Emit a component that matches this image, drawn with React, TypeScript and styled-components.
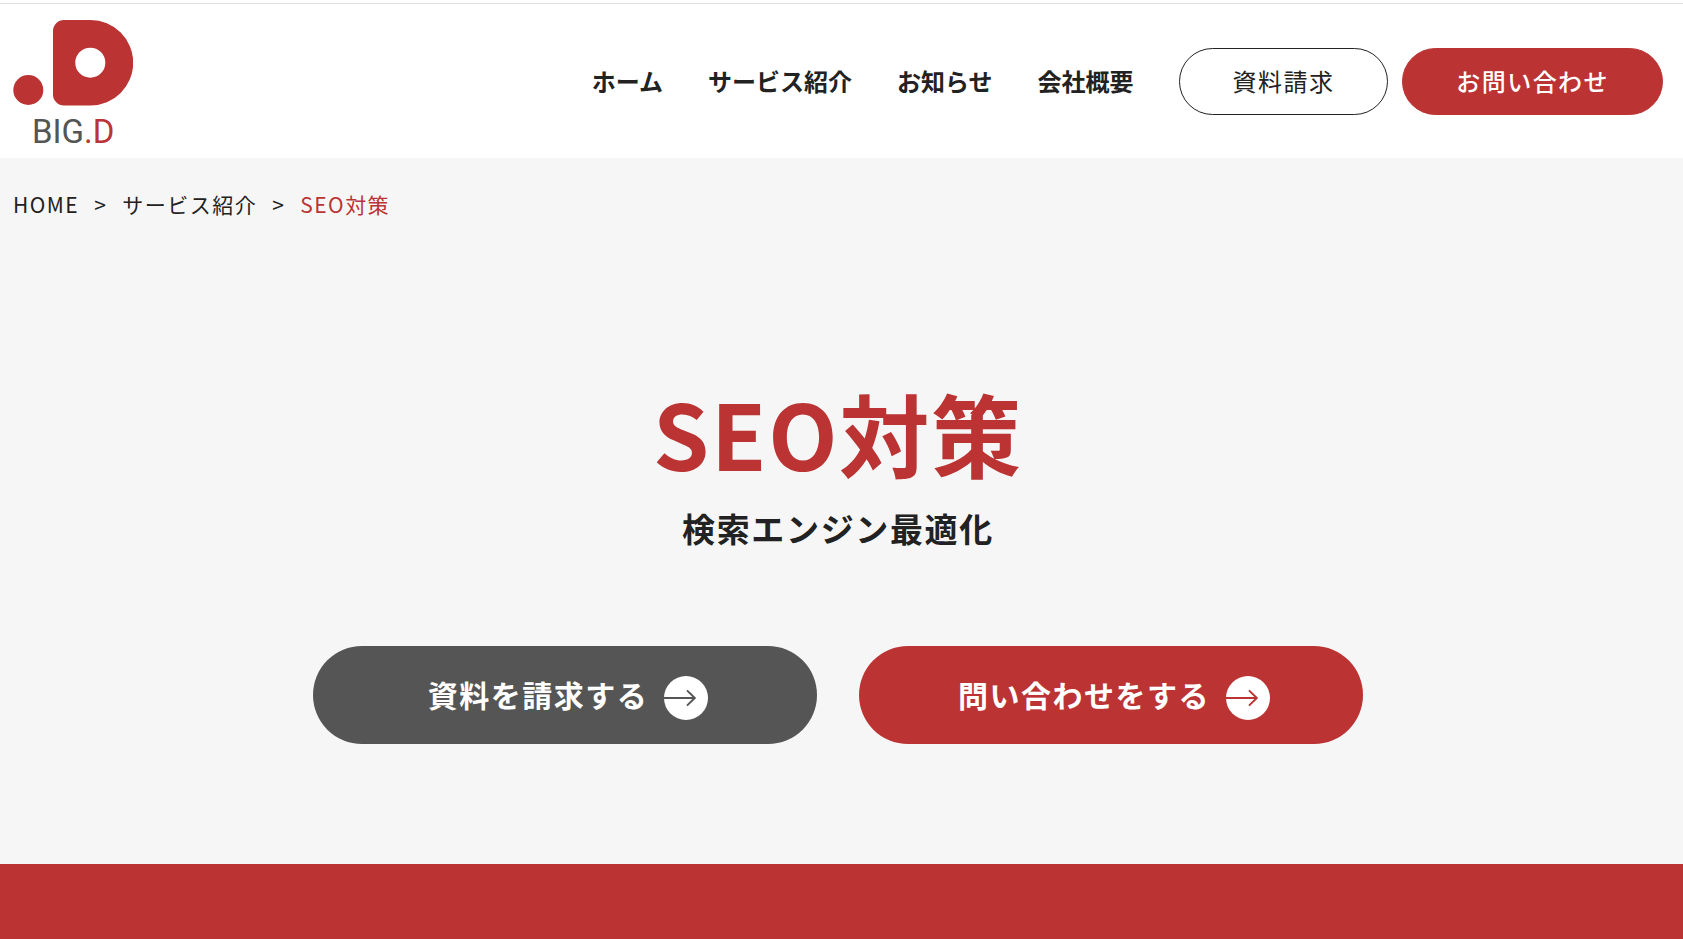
import React from "react";
import styled, { createGlobalStyle } from "styled-components";

const red = "#bb3333";
const ink = "#222222";
const gray = "#555555";

const GlobalStyle = createGlobalStyle`
  *, *::before, *::after { box-sizing: border-box; }
  body {
    margin: 0;
    background: #ffffff;
    color: ${ink};
    font-family: "Noto Sans CJK JP", "Noto Sans", sans-serif;
  }
  a { color: inherit; text-decoration: none; }
`;

const Header = styled.header`
  display: flex;
  justify-content: space-between;
  align-items: flex-start;
  margin-top: 3px;
  padding: 16px 20px 12px 13px;
  border-top: 1px solid #e0e0e0;
`;

const LogoLink = styled.a`
  display: flex;
  flex-direction: column;
  width: 120px;
`;

const LogoMark = styled.svg`
  display: block;
  width: 120px;
  height: 86px;
`;

const LogoText = styled.span`
  padding: 11px 0 0 19px;
  font-family: Roboto, sans-serif;
  font-size: 33px;
  line-height: 29px;
  color: ${gray};

  em {
    font-style: normal;
    color: ${red};
  }
`;

const HeaderRight = styled.div`
  display: flex;
  align-items: center;
  gap: 45px;
  padding-top: 28px;
`;

const NavList = styled.ul`
  display: flex;
  gap: 45px;
  margin: 0;
  padding: 0 0 2px;
  list-style: none;
  font-size: 24px;
  font-weight: 700;
  line-height: 36px;
  white-space: nowrap;
`;

const HeaderButtons = styled.div`
  display: flex;
  gap: 14px;
`;

const PillLink = styled.a<{ $filled?: boolean }>`
  padding: 14px 53px 16px;
  border: 1px solid ${(p) => (p.$filled ? red : ink)};
  border-radius: 34px;
  background: ${(p) => (p.$filled ? red : "#ffffff")};
  color: ${(p) => (p.$filled ? "#ffffff" : ink)};
  font-size: 24px;
  font-weight: ${(p) => (p.$filled ? 500 : 400)};
  line-height: 35px;
  letter-spacing: 0.06em;
  white-space: nowrap;
`;

const Hero = styled.main`
  padding-bottom: 120px;
  background: #f6f6f6;
`;

const Breadcrumb = styled.ol`
  display: flex;
  gap: 15px;
  margin: 0;
  padding: 31px 13px 0;
  list-style: none;
  font-size: 21px;
  line-height: 30px;
  letter-spacing: 0.07em;

  li { display: flex; gap: 15px; }
  li + li::before { content: ">"; }
  [aria-current] { color: ${red}; }
`;

const Title = styled.h1`
  margin: 143px 7px 0 0;
  color: ${red};
  font-size: 90px;
  font-weight: 700;
  line-height: 140px;
  letter-spacing: 0.02em;
  text-align: center;
`;

const Subtitle = styled.p`
  margin: 0 7px 0 0;
  font-size: 33px;
  font-weight: 700;
  line-height: 52px;
  letter-spacing: 0.05em;
  text-align: center;
`;

const Actions = styled.div`
  display: flex;
  justify-content: center;
  gap: 42px;
  margin: 92px 7px 0 0;
`;

const ActionLink = styled.a<{ $color: string }>`
  display: flex;
  justify-content: center;
  align-items: center;
  gap: 16px;
  width: 504px;
  height: 98px;
  padding: 0 0 2px 6px;
  border-radius: 49px;
  background: ${(p) => p.$color};
  color: #ffffff;
  font-size: 30px;
  font-weight: 700;
  line-height: 45px;
  letter-spacing: 0.05em;
`;

const ArrowIcon = styled.svg`
  flex: none;
  width: 44px;
  height: 44px;
  margin-top: 8px;
`;

const Band = styled.section`
  min-height: 75px;
  background: ${red};
`;

const navItems = ["ホーム", "サービス紹介", "お知らせ", "会社概要"];

function Arrow({ color }: { color: string }) {
  return (
    <ArrowIcon viewBox="0 0 45 45" aria-hidden="true">
      <circle cx="22.5" cy="22.5" r="22.5" fill="#ffffff" />
      <path d="M0 22.5H31.5M23.5 14.7L31.5 22.5L23.5 30.3" fill="none" stroke={color} strokeWidth="2" />
    </ArrowIcon>
  );
}

export default function App() {
  return (
    <>
      <GlobalStyle />
      <Header>
        <LogoLink href="#" aria-label="BIG.D">
          <LogoMark viewBox="0 0 120 86" aria-hidden="true">
            <path
              fillRule="evenodd"
              fill={red}
              d="M51 0H77.500A42.700 42.700 0 0 1 77.500 85.500H51A11 11 0 0 1 40 74.500V11A11 11 0 0 1 51 0ZM77.300 27.700A15 15 0 1 0 77.300 57.700A15 15 0 1 0 77.300 27.700Z"
            />
            <circle cx="15.300" cy="70" r="15" fill={red} />
          </LogoMark>
          <LogoText>
            BIG<em>.D</em>
          </LogoText>
        </LogoLink>
        <HeaderRight>
          <nav>
            <NavList>
              {navItems.map((item) => (
                <li key={item}>
                  <a href="#">{item}</a>
                </li>
              ))}
            </NavList>
          </nav>
          <HeaderButtons>
            <PillLink href="#">資料請求</PillLink>
            <PillLink href="#" $filled>
              お問い合わせ
            </PillLink>
          </HeaderButtons>
        </HeaderRight>
      </Header>
      <Hero>
        <nav aria-label="breadcrumb">
          <Breadcrumb>
            <li>
              <a href="#">HOME</a>
            </li>
            <li>
              <a href="#">サービス紹介</a>
            </li>
            <li>
              <span aria-current="page">SEO対策</span>
            </li>
          </Breadcrumb>
        </nav>
        <Title>SEO対策</Title>
        <Subtitle>検索エンジン最適化</Subtitle>
        <Actions>
          <ActionLink href="#" $color={gray}>
            資料を請求する
            <Arrow color={gray} />
          </ActionLink>
          <ActionLink href="#" $color={red}>
            問い合わせをする
            <Arrow color={red} />
          </ActionLink>
        </Actions>
      </Hero>
      <Band />
    </>
  );
}
